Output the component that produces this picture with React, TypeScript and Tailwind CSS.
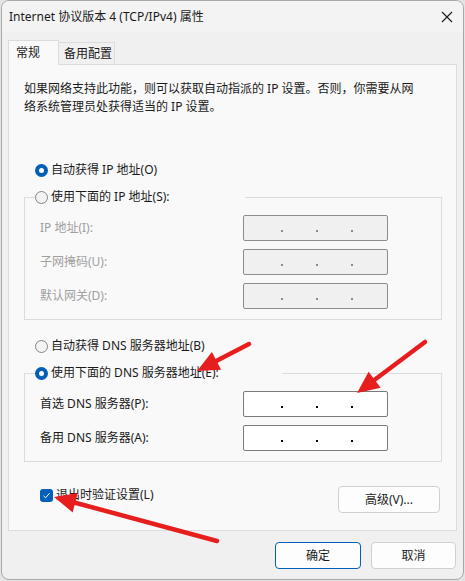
import React from 'react'

const font = "font-['Noto_Sans','Noto_Sans_CJK_SC',sans-serif]"

function Radio({ checked, label }: { checked?: boolean; label: string }) {
  return (
    <div className="flex h-[16px] items-center">
      {checked ? (
        <span className="flex h-[13px] w-[13px] items-center justify-center rounded-full bg-[#005fb8]">
          <span className="h-[5px] w-[5px] rounded-full bg-white" />
        </span>
      ) : (
        <span className="h-[13px] w-[13px] rounded-full border border-[#858585] bg-[#f3f3f3]" />
      )}
      <span className="ml-[3px] whitespace-nowrap text-[12px] leading-[16px] text-[#1a1a1a]">{label}</span>
    </div>
  )
}

function IpBox({ disabled }: { disabled?: boolean }) {
  return (
    <div
      className={
        disabled
          ? 'flex h-[26px] w-[145px] items-start gap-[33px] rounded-[2px] border border-[#8c8c8c] bg-[#f0f0f0] pl-[37px] pt-[14px]'
          : 'flex h-[26px] w-[145px] items-start gap-[33px] rounded-[2px] border border-[#7a7a7a] bg-white pl-[37px] pt-[14px]'
      }
    >
      {[0, 1, 2].map((i) => (
        <span key={i} className={disabled ? 'h-[2px] w-[2px] bg-[#8a8a8a]' : 'h-[2px] w-[2px] bg-black'} />
      ))}
    </div>
  )
}

function Row({ label, disabled }: { label: string; disabled?: boolean }) {
  return (
    <div className="flex h-[26px] items-center">
      <span
        className={
          disabled
            ? 'w-[218px] whitespace-nowrap pl-[15px] text-[12px] text-[#a0a0a0]'
            : 'w-[218px] whitespace-nowrap pl-[15px] text-[12px] text-[#1a1a1a]'
        }
      >
        {label}
      </span>
      <IpBox disabled={disabled} />
    </div>
  )
}

// red annotation arrow: line from tail to the base of a filled head
function Arrow({ x1, y1, x2, y2 }: { x1: number; y1: number; x2: number; y2: number }) {
  const dx = x2 - x1
  const dy = y2 - y1
  const len = Math.hypot(dx, dy)
  const ux = dx / len
  const uy = dy / len
  const L = 22
  const W = 10
  const bx = x2 - ux * L
  const by = y2 - uy * L
  const p1 = `${bx - uy * W},${by + ux * W}`
  const p2 = `${bx + uy * W},${by - ux * W}`
  return (
    <g>
      <line x1={x1} y1={y1} x2={bx + ux * 2} y2={by + uy * 2} stroke="#e61e1e" strokeWidth={4.5} strokeLinecap="round" />
      <polygon points={`${x2},${y2} ${p1} ${p2}`} fill="#e61e1e" />
    </g>
  )
}

export default function App() {
  return (
    <div className={`relative h-[581px] w-[465px] overflow-hidden bg-[#e4e4e4] pl-[1px] ${font}`}>
      <div className="h-[580px] w-[463px] overflow-hidden rounded-lg border border-[#a8a8a8] bg-[#f0f0f0]">
        {/* title bar */}
        <div className="flex h-[31px] items-center justify-between bg-[#f3f3f3] pl-[7px] pr-[9px]">
          <span className="whitespace-nowrap text-[12px] text-[#1a1a1a]">Internet 协议版本 4 (TCP/IPv4) 属性</span>
          <svg width="12" height="12" viewBox="0 0 12 12" className="mr-[1px]">
            <path d="M1 1 L11 11 M11 1 L1 11" stroke="#1a1a1a" strokeWidth="1.1" />
          </svg>
        </div>

        {/* tabs */}
        <div className="flex h-[32px] items-end pl-[6px]">
          <div className="relative z-10 -mb-px flex h-[25px] w-[51px] items-center border border-b-0 border-[#dcdcdc] bg-[#f9f9f9] pl-[7px] text-[12px] text-[#1a1a1a]">
            常规
          </div>
          <div className="flex h-[22px] w-[56px] items-center border border-b-0 border-l-0 border-[#dcdcdc] bg-[#f0f0f0] pl-[5px] text-[12px] text-[#1a1a1a]">
            备用配置
          </div>
        </div>

        {/* panel */}
        <div className="mx-[6px] h-[467px] border border-[#dcdcdc] bg-[#f9f9f9] pl-[15px] pt-[15px]">
          <p className="whitespace-nowrap text-[12px] leading-[18px] text-[#1a1a1a]">
            如果网络支持此功能，则可以获取自动指派的 IP 设置。否则，你需要从网
            <br />
            络系统管理员处获得适当的 IP 设置。
          </p>

          <div className="ml-[11px] mt-[46px]">
            <Radio checked label="自动获得 IP 地址(O)" />
          </div>

          <fieldset className="mt-[11px] w-[418px] border border-[#dcdcdc] pb-[10px]">
            <legend className="ml-[10px] w-[210px]">
              <Radio label="使用下面的 IP 地址(S):" />
            </legend>
            <div className="flex flex-col gap-[8px] pt-[10px]">
              <Row label="IP 地址(I):" disabled />
              <Row label="子网掩码(U):" disabled />
              <Row label="默认网关(D):" disabled />
            </div>
          </fieldset>

          <div className="ml-[11px] mt-[18px]">
            <Radio label="自动获得 DNS 服务器地址(B)" />
          </div>

          <fieldset className="mt-[11px] w-[418px] border border-[#dcdcdc] pb-[10px]">
            <legend className="ml-[10px] w-[247px]">
              <Radio checked label="使用下面的 DNS 服务器地址(E):" />
            </legend>
            <div className="flex flex-col gap-[8px] pt-[10px]">
              <Row label="首选 DNS 服务器(P):" />
              <Row label="备用 DNS 服务器(A):" />
            </div>
          </fieldset>

          <div className="mt-[24px] flex w-[418px] items-start justify-between">
            <div className="ml-[16px] mt-[1px] flex h-[16px] items-center">
              <span className="flex h-[13px] w-[13px] items-center justify-center rounded-[3px] bg-[#005fb8]">
                <svg width="9" height="9" viewBox="0 0 9 9">
                  <path d="M1.5 4.8 L3.6 6.8 L7.6 2.2" fill="none" stroke="white" strokeWidth="1" />
                </svg>
              </span>
              <span className="ml-[3px] whitespace-nowrap text-[12px] text-[#1a1a1a]">退出时验证设置(L)</span>
            </div>
            <button className="mr-[2px] h-[27px] w-[102px] rounded-[4px] border border-[#d0d0d0] bg-[#fdfdfd] text-[12px] text-[#1a1a1a]">
              高级(V)...
            </button>
          </div>
        </div>

        {/* dialog buttons */}
        <div className="mt-[11px] flex justify-end gap-[10px] pr-[7px]">
          <button className="h-[27px] w-[86px] rounded-[4px] border border-[#005fb8] bg-[#fdfdfd] text-[12px] text-[#1a1a1a]">
            确定
          </button>
          <button className="h-[27px] w-[85px] rounded-[4px] border border-[#d0d0d0] bg-[#fdfdfd] text-[12px] text-[#1a1a1a]">
            取消
          </button>
        </div>
      </div>

      {/* annotation arrows */}
      <svg className="pointer-events-none absolute inset-0" width="465" height="581">
        <Arrow x1={249} y1={344} x2={197} y2={371} />
        <Arrow x1={425} y1={342} x2={357} y2={393} />
        <Arrow x1={217} y1={541} x2={54} y2={497} />
      </svg>
    </div>
  )
}
